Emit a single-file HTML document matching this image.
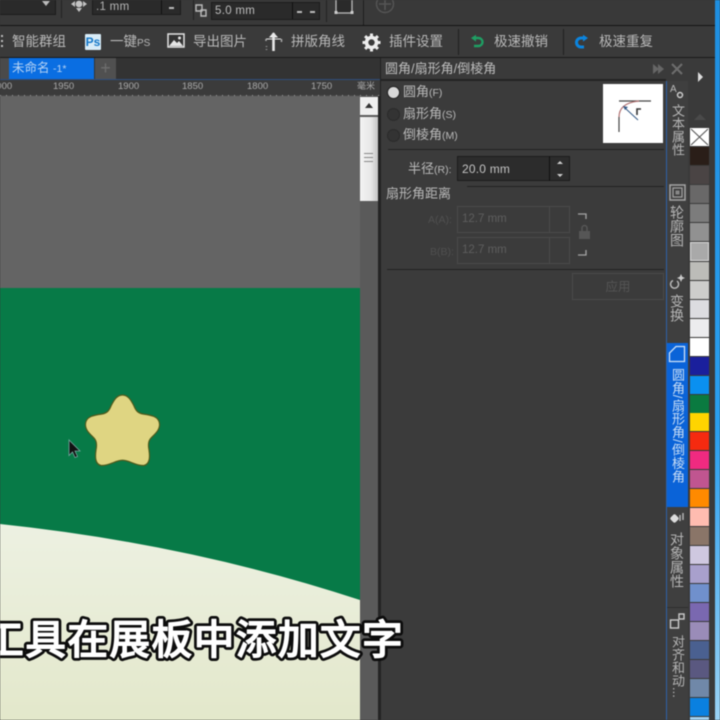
<!DOCTYPE html>
<html><head><meta charset="utf-8">
<style>
html,body{margin:0;padding:0;background:#3a3a3a;overflow:hidden}
#p{position:relative;width:720px;height:720px;overflow:hidden;background:#3a3a3a;font-family:"Liberation Sans","Noto Sans CJK SC",sans-serif;color:#b9b9b9;filter:blur(.45px)}
#p div{position:absolute}
.t{font-size:13.5px;line-height:18px;white-space:nowrap}
.v{writing-mode:vertical-rl;font-size:13.5px;line-height:16px;white-space:nowrap;color:#b5b5b5}
.in{background:#2a2a2a;border:1px solid #1c1c1c;box-sizing:border-box}
.dis{border:1px solid #4a4a4a;box-sizing:border-box;color:#5e5e5e;font-size:11.5px;line-height:24px;padding-left:4px}
.sw{left:690px;width:19px;height:18px}
</style></head><body><div id="p">

<!-- top toolbar -->
<div style="left:0;top:0;width:720px;height:25px;background:#393939"></div>
<div style="left:0;top:25px;width:715px;height:1px;background:#141414"></div>
<div class="in" style="left:-2px;top:-2px;width:58px;height:17px"></div>
<div style="left:42px;top:1px;width:0;height:0;border:4px solid transparent;border-top:5px solid #bbb"></div>
<div style="left:61px;top:0;width:1px;height:18px;background:#222"></div>
<div class="in" style="left:92px;top:-2px;width:89px;height:17px;color:#b5b5b5;font-size:11.5px;line-height:17px;padding-left:3px;letter-spacing:.3px">.1 mm</div>
<div style="left:161px;top:-2px;width:1px;height:16px;background:#111"></div>
<div style="left:169px;top:7px;width:5px;height:2px;background:#bbb"></div>
<svg style="position:absolute;left:70px;top:-5px" width="18" height="18" viewBox="0 0 18 18"><path d="M9 1l3 4H6zM9 17l-3-4h6zM1 9l4-3v6zM17 9l-4 3V6z" fill="#c4c4c4"/><circle cx="9" cy="9" r="3.4" fill="#c4c4c4"/></svg>
<div style="left:193px;top:0;width:1px;height:20px;background:#222"></div>
<svg style="position:absolute;left:194px;top:2px" width="16" height="17" viewBox="0 0 16 17"><path d="M2 3h6v6H2zM7 8h5v6H7z" fill="none" stroke="#bbb" stroke-width="1.4"/></svg>
<div class="in" style="left:211px;top:2px;width:109px;height:18px;color:#bdbdbd;font-size:11.5px;line-height:17px;padding-left:3px;letter-spacing:.3px">5.0 mm</div>
<div style="left:292px;top:2px;width:1px;height:17px;background:#111"></div>
<div style="left:297px;top:11px;width:5px;height:2px;background:#bbb"></div>
<div style="left:310px;top:11px;width:5px;height:2px;background:#bbb"></div>
<div style="left:326px;top:0;width:1px;height:22px;background:#222"></div>
<svg style="position:absolute;left:332px;top:-6px" width="24" height="22" viewBox="0 0 24 22"><rect x="4" y="3" width="16" height="16" fill="#2a2a2a" stroke="#bbb" stroke-width="1.3"/><rect x="2.500" y="17" width="3" height="3" fill="#ccc"/><rect x="18.500" y="17" width="3" height="3" fill="#ccc"/></svg>
<div style="left:363px;top:0;width:1px;height:25px;background:#1e1e1e"></div>
<svg style="position:absolute;left:375px;top:-6px" width="20" height="20" viewBox="0 0 20 20"><circle cx="10" cy="10" r="8.500" fill="none" stroke="#555" stroke-width="1.4"/><path d="M10 4v12M4 10h12" stroke="#555" stroke-width="1.6"/></svg>

<!-- second toolbar -->
<div style="left:0;top:26px;width:715px;height:31px;background:#3a3a3a"></div>
<div style="left:0;top:57px;width:715px;height:1px;background:#1a1a1a"></div>
<div style="left:1px;top:35px;width:2px;height:2px;background:#bbb;box-shadow:0 5px #bbb,0 10px #bbb"></div>
<div class="t" style="left:12px;top:33px">智能群组</div>
<div style="left:85px;top:34px;width:16px;height:16px;background:#d8ecf8;border-radius:1px"></div>
<div style="left:85px;top:34px;width:16px;height:16px;color:#1678c8;font-size:12px;font-weight:bold;line-height:16px;text-align:center">Ps</div>
<div class="t" style="left:110px;top:33px">一键<span style="font-size:10px">PS</span></div>
<svg style="position:absolute;left:167px;top:33px" width="18" height="15" viewBox="0 0 18 15"><rect x="1" y="1" width="16" height="13" fill="#333" stroke="#e4e4e4" stroke-width="1.500"/><path d="M2 13l5-6 3 3 2-2 4 5z" fill="#e4e4e4"/><circle cx="12.500" cy="5" r="1.500" fill="#e4e4e4"/></svg>
<div class="t" style="left:193px;top:33px">导出图片</div>
<svg style="position:absolute;left:264px;top:32px" width="20" height="20" viewBox="0 0 20 20"><path d="M9.500 1v18" stroke="#e8e8e8" stroke-width="2.600"/><path d="M6 5l3.500-4L13 5zM2 7h15" fill="#e8e8e8" stroke="#e8e8e8" stroke-width="1"/><path d="M17.500 7v3M2 7v2" stroke="#aaa" stroke-width="1.500"/><path d="M2.500 14v1M2.500 17v1" stroke="#999" stroke-width="1.500"/></svg>
<div class="t" style="left:291px;top:33px">拼版角线</div>
<svg style="position:absolute;left:362px;top:33px" width="19" height="19" viewBox="0 0 19 19"><circle cx="9.500" cy="9.500" r="5" fill="none" stroke="#ececec" stroke-width="3.600"/><path d="M9.500 .5v3.500M9.500 15v3.500M.5 9.500H4M15 9.500h3.500M3.100 3.100l2.500 2.500M13.400 13.400l2.500 2.500M15.900 3.100l-2.500 2.500M5.600 13.400l-2.500 2.500" stroke="#ececec" stroke-width="3"/></svg>
<div class="t" style="left:389px;top:33px">插件设置</div>
<div style="left:458px;top:29px;width:1px;height:26px;background:#202020"></div>
<svg style="position:absolute;left:469px;top:34px" width="16" height="16" viewBox="0 0 16 16"><path d="M5 4h4.500a4 4 0 0 1 0 8H5" fill="none" stroke="#1f9e63" stroke-width="2.400"/><path d="M7 .8L2 4l5 3.600z" fill="#1f9e63"/></svg>
<div class="t" style="left:494px;top:33px">极速撤销</div>
<div style="left:563px;top:29px;width:1px;height:26px;background:#202020"></div>
<svg style="position:absolute;left:573px;top:34px" width="17" height="16" viewBox="0 0 17 16"><path d="M12 4H8a4.500 4.500 0 0 0 0 9h3" fill="none" stroke="#0b84de" stroke-width="3"/><path d="M10 .8l5 3.200-5 3.600z" fill="#0b84de"/></svg>
<div class="t" style="left:599px;top:33px">极速重复</div>

<!-- tab row -->
<div style="left:0;top:58px;width:380px;height:21px;background:#333"></div>
<div style="left:0;top:58px;width:9px;height:21px;background:#4a4a4a"></div>
<div style="left:9px;top:58px;width:85px;height:21px;background:#0a6ee2"></div>
<div style="left:12px;top:60px;font-size:12.500px;line-height:17px;color:#b8d4f4;white-space:nowrap">未命名 <span style="font-size:10.500px">-1*</span></div>
<div style="left:95px;top:58px;width:21px;height:21px;background:#505050;color:#6e6e6e;font-size:18px;line-height:20px;text-align:center">+</div>
<div style="left:0;top:79px;width:380px;height:1px;background:#2e4e7c"></div>

<!-- ruler -->
<div style="left:0;top:80px;width:380px;height:16px;background:#3b3b3b"></div>
<div style="left:0;top:95px;width:380px;height:1px;background:repeating-linear-gradient(90deg,#999 0 1px,#444 1px 6px)"></div>
<div style="left:-9px;top:81px;font-size:9.500px;line-height:11px;color:#aaa">2000</div>
<div style="left:53px;top:81px;font-size:9.500px;line-height:11px;color:#aaa">1950</div>
<div style="left:118px;top:81px;font-size:9.500px;line-height:11px;color:#aaa">1900</div>
<div style="left:182px;top:81px;font-size:9.500px;line-height:11px;color:#aaa">1850</div>
<div style="left:247px;top:81px;font-size:9.500px;line-height:11px;color:#aaa">1800</div>
<div style="left:311px;top:81px;font-size:9.500px;line-height:11px;color:#aaa">1750</div>
<div style="left:357px;top:81px;font-size:9px;line-height:11px;color:#aaa">毫米</div>

<!-- canvas -->
<div style="left:0;top:96px;width:360px;height:624px;background:#646464"></div>
<svg style="position:absolute;left:0;top:288px" width="360" height="432" viewBox="0 288 360 432">
<defs><linearGradient id="cr" x1="0" y1="0" x2="0" y2="1"><stop offset="0" stop-color="#edf1e2"/><stop offset="1" stop-color="#e3e8cb"/></linearGradient></defs>
<rect x="0" y="288" width="360" height="432" fill="#077a47"/>
<path d="M0 524Q190 544 360 600V720H0z" fill="url(#cr)"/>
<path d="M122.500 395C128 395 131 400 134 406C136 411 138 413 143 414C150 415 159 416 159.500 424C160 430 155 434 151 438C148 441 148 445 149 450C150 457 150 464 144 465.500C138 466 131 462 127 461C124 460 121 460 118 461C114 462 107 466 101 465.500C95 464 95 457 96 450C97 445 97 441 94 438C90 434 85 430 85.500 424C86 416 95 415 102 414C107 413 109 411 111 406C114 400 117 395 122.500 395Z" fill="#dfd582" stroke="#4f5a1c" stroke-width="1.200"/>
<path d="M69 440v15.500l3.500-3.500 2.500 5.500 2.500-1-2.500-5.500h5z" fill="#111" stroke="#7aa5a0" stroke-width=".8"/>
</svg>

<!-- scrollbar -->
<div style="left:360px;top:96px;width:20px;height:624px;background:#5a5a5a"></div>
<div style="left:378px;top:96px;width:2px;height:624px;background:#242424"></div>
<div style="left:360px;top:97px;width:18px;height:18px;background:#efefef"></div>
<div style="left:365px;top:103px;width:0;height:0;border:4px solid transparent;border-top:0;border-bottom:5px solid #333"></div>
<div style="left:360px;top:117px;width:18px;height:84px;background:linear-gradient(90deg,#f3f3f3 0,#e8e8e8 60%,#c4c4c4 100%)"></div>
<div style="left:364px;top:153px;width:9px;height:1px;background:#888;box-shadow:0 4px #888,0 8px #888"></div>

<!-- panel -->
<div style="left:380px;top:58px;width:286px;height:662px;background:#3b3b3b"></div>
<div style="left:380px;top:58px;width:286px;height:22px;background:#3a3a3a"></div>
<div style="left:380px;top:79px;width:286px;height:2px;background:#232323"></div>
<div style="left:380px;top:58px;width:1px;height:662px;background:#222"></div>
<div class="t" style="left:385px;top:60px;font-size:13px;color:#bdbdbd">圆角/扇形角/倒棱角</div>
<div style="left:653px;top:64px;width:0;height:0;border:5px solid transparent;border-left:6px solid #666;border-right:0"></div>
<div style="left:658px;top:64px;width:0;height:0;border:5px solid transparent;border-left:6px solid #666;border-right:0"></div>
<svg style="position:absolute;left:671px;top:63px" width="12" height="12" viewBox="0 0 12 12"><path d="M1 1l10 10M11 1L1 11" stroke="#6e6e6e" stroke-width="2"/></svg>

<div style="left:387px;top:86px;width:13px;height:13px;border-radius:50%;background:#d8d8d8;border:1px solid #222;box-sizing:border-box"></div>
<div style="left:387px;top:108px;width:13px;height:13px;border-radius:50%;background:#333;border:1px solid #2a2a2a;box-sizing:border-box"></div>
<div style="left:387px;top:129px;width:13px;height:13px;border-radius:50%;background:#333;border:1px solid #2a2a2a;box-sizing:border-box"></div>
<div class="t" style="left:403px;top:83px;font-size:13px">圆角<span style="font-size:10.500px">(F)</span></div>
<div class="t" style="left:403px;top:105px;font-size:13px">扇形角<span style="font-size:10.500px">(S)</span></div>
<div class="t" style="left:403px;top:126px;font-size:13px">倒棱角<span style="font-size:10.500px">(M)</span></div>

<div style="left:603px;top:84px;width:60px;height:59px;background:#fff"></div>
<svg style="position:absolute;left:603px;top:84px" width="60" height="59" viewBox="0 0 60 59"><path d="M16 48V33" stroke="#444" stroke-width="1.200"/><path d="M16 17H48" stroke="#444" stroke-width="1.200"/><path d="M16 33Q16 19 36 17" fill="none" stroke="#b07070" stroke-width="1.200"/><path d="M35 36L22 24" stroke="#355a86" stroke-width="1"/><path d="M20 22l5 1-3 3z" fill="#355a86"/><path d="M34 31v-6h4" fill="none" stroke="#333" stroke-width="1.600"/></svg>

<div style="left:388px;top:149px;width:276px;height:1px;background:#222"></div>
<div class="t" style="left:408px;top:160px;font-size:13px">半径<span style="font-size:10.500px">(R):</span></div>
<div class="in" style="left:457px;top:156px;width:113px;height:25px;background:#2c2c2c;color:#c4c4c4;font-size:12px;line-height:24px;padding-left:4px;letter-spacing:.2px">20.0 mm</div>
<div style="left:549px;top:156px;width:1px;height:25px;background:#111"></div>
<div style="left:557px;top:161px;width:0;height:0;border:3px solid transparent;border-top:0;border-bottom:3px solid #ccc"></div>
<div style="left:557px;top:174px;width:0;height:0;border:3px solid transparent;border-bottom:0;border-top:3px solid #ccc"></div>

<div class="t" style="left:386px;top:185px;font-size:13px">扇形角距离</div>
<div style="left:467px;top:186px;width:197px;height:1px;background:#222"></div>
<div class="t" style="left:428px;top:211px;font-size:10.500px;color:#505050">A(A):</div>
<div class="t" style="left:430px;top:243px;font-size:10.500px;color:#505050">B(B):</div>
<div class="dis" style="left:457px;top:206px;width:113px;height:27px">12.7 mm</div>
<div class="dis" style="left:457px;top:237px;width:113px;height:27px">12.7 mm</div>
<div style="left:549px;top:206px;width:1px;height:27px;background:#4a4a4a"></div>
<div style="left:549px;top:237px;width:1px;height:27px;background:#4a4a4a"></div>
<svg style="position:absolute;left:575px;top:210px" width="20" height="50" viewBox="0 0 20 50"><path d="M3 4h8v5M11 40v5H3" fill="none" stroke="#a5a5a5" stroke-width="1.300"/><rect x="4" y="21" width="11" height="8" fill="#565656"/><path d="M7 21v-3a2.500 2.500 0 0 1 5 0v3" fill="none" stroke="#565656" stroke-width="1.500"/></svg>
<div style="left:387px;top:269px;width:277px;height:1px;background:#222"></div>
<div style="left:572px;top:273px;width:92px;height:27px;border:1px solid #4a4a4a;box-sizing:border-box;color:#555;font-size:12.500px;line-height:26px;text-align:center">应用</div>

<!-- vertical tabs -->
<div style="left:666px;top:81px;width:22px;height:639px;background:#3f3f3f"></div>
<div style="left:666px;top:81px;width:1px;height:639px;background:#2c62a8"></div>
<div style="left:667px;top:343px;width:21px;height:164px;background:#0a63d8"></div>
<svg style="position:absolute;left:668px;top:82px" width="20" height="20" viewBox="0 0 20 20"><text x="2" y="10" font-family="Liberation Sans" font-size="10" fill="#bbb">A</text><circle cx="12" cy="13" r="2.500" fill="none" stroke="#ccc" stroke-width="1.500"/></svg>
<div class="v" style="left:669px;top:104px;font-size:13px">文本属性</div>
<svg style="position:absolute;left:669px;top:184px" width="17" height="17" viewBox="0 0 17 17"><rect x="1" y="1" width="15" height="15" fill="none" stroke="#a5a5a5" stroke-width="1.500"/><rect x="4" y="4" width="9" height="9" fill="none" stroke="#a5a5a5" stroke-width="1.200"/><rect x="6.500" y="6.500" width="4" height="4" fill="#888"/></svg>
<div class="v" style="left:669px;top:205px;font-size:14px">轮廓图</div>
<svg style="position:absolute;left:668px;top:272px" width="19" height="19" viewBox="0 0 19 19"><path d="M9 9a4 4 0 1 1-4-.500" fill="none" stroke="#bbb" stroke-width="1.400"/><path d="M13 2l1.200 2.800L17 6l-2.800 1.200L13 10l-1.200-2.800L9 6l2.800-1.200z" fill="#ccc"/></svg>
<div class="v" style="left:669px;top:294px;font-size:14px">变换</div>
<svg style="position:absolute;left:668px;top:345px" width="18" height="18" viewBox="0 0 18 18"><path d="M1.500 16.500V8L8 1.500h8.500v15z" fill="none" stroke="#cfe2f8" stroke-width="1.300"/></svg>
<div class="v" style="left:669px;top:368px;color:#c9def6;font-size:13px;letter-spacing:.4px">圆角/扇形角/倒棱角</div>
<svg style="position:absolute;left:668px;top:510px" width="19" height="18" viewBox="0 0 19 18"><rect x="3" y="5" width="7" height="7" rx="2" transform="rotate(45 6.500 8.500)" fill="#ddd"/><path d="M12 11V5M15 10V3" stroke="#bbb" stroke-width="1.400"/></svg>
<div class="v" style="left:669px;top:532px;font-size:14px">对象属性</div>
<div style="left:667px;top:607px;width:21px;height:1px;background:#2e2e2e"></div>
<svg style="position:absolute;left:668px;top:612px" width="19" height="20" viewBox="0 0 19 20"><rect x="2.500" y="8" width="8" height="8" fill="none" stroke="#ccc" stroke-width="1.400"/><rect x="11" y="2" width="5" height="5" fill="none" stroke="#ccc" stroke-width="1.400"/></svg>
<div class="v" style="left:669px;top:635px;font-size:13px">对齐和动...</div>

<!-- palette -->
<div style="left:688px;top:58px;width:27px;height:662px;background:#3a3a3a"></div>
<div style="left:715px;top:0;width:5px;height:720px;background:linear-gradient(180deg,#1e8ee0,#2a9ff0 60%,#9ad2f4)"></div>
<div style="left:698px;top:72px;width:0;height:0;border:5px solid transparent;border-left:5px solid #ddd;border-right:0"></div>
<div style="left:694px;top:114px;width:0;height:0;border:6px solid transparent;border-top:0;border-bottom:6px solid #4a4a4a"></div>
<div class="sw" style="top:128px;background:#fff"></div>
<svg style="position:absolute;left:690px;top:128px" width="19" height="18" viewBox="0 0 19 18"><path d="M1 1l17 16M18 1L1 17" stroke="#555" stroke-width="1.100"/></svg>
<div class="sw" style="top:147px;background:#2a1e18"></div>
<div class="sw" style="top:166px;background:#4a4444"></div>
<div class="sw" style="top:185px;background:#696868"></div>
<div class="sw" style="top:204px;background:#7c7c7c"></div>
<div class="sw" style="top:223px;background:#919191"></div>
<div class="sw" style="top:242px;height:19px;background:#a9a9a9;outline:1px solid #ddd;outline-offset:-1px"></div>
<div class="sw" style="top:262px;background:#bcbcb8"></div>
<div class="sw" style="top:281px;background:#cdcdcb"></div>
<div class="sw" style="top:300px;background:#dcdce0"></div>
<div class="sw" style="top:319px;background:#ececee"></div>
<div class="sw" style="top:338px;background:#fff"></div>
<div class="sw" style="top:357px;background:#1a1f9c"></div>
<div class="sw" style="top:376px;background:#0a90f0"></div>
<div class="sw" style="top:395px;background:#0a7a40"></div>
<div class="sw" style="top:413px;background:#ffd400"></div>
<div class="sw" style="top:432px;background:#f52a10"></div>
<div class="sw" style="top:451px;background:#f02a80"></div>
<div class="sw" style="top:470px;background:#c05590"></div>
<div class="sw" style="top:489px;background:#ff8a00"></div>
<div class="sw" style="top:508px;background:#ffbcb0"></div>
<div class="sw" style="top:527px;background:#8a7568"></div>
<div class="sw" style="top:546px;background:#cfc8e0"></div>
<div class="sw" style="top:565px;background:#a8a0cc"></div>
<div class="sw" style="top:584px;background:#7090cc"></div>
<div class="sw" style="top:603px;background:#7a68b0"></div>
<div class="sw" style="top:622px;background:#9a8cb8"></div>
<div class="sw" style="top:641px;background:#4a6090"></div>
<div class="sw" style="top:660px;background:#5a5880"></div>
<div class="sw" style="top:679px;background:#7088a8"></div>
<div class="sw" style="top:698px;background:#0a80e0"></div>
<div class="sw" style="top:717px;height:3px;background:#a0d0f0"></div>

<!-- subtitle -->
<svg style="position:absolute;left:0;top:600px" width="720" height="80" viewBox="0 0 720 80">
<text x="-17" y="54" font-family="Liberation Sans,Noto Sans CJK SC,sans-serif" font-size="41" font-weight="500" letter-spacing="1.100" fill="#0c0c0c" stroke="#0c0c0c" stroke-width="6.500" stroke-linejoin="round">工具在展板中添加文字</text>
<text x="-17" y="54" font-family="Liberation Sans,Noto Sans CJK SC,sans-serif" font-size="41" font-weight="500" letter-spacing="1.100" fill="#fff" stroke="#fff" stroke-width="1" stroke-linejoin="round">工具在展板中添加文字</text>
</svg>
</div></body></html>
